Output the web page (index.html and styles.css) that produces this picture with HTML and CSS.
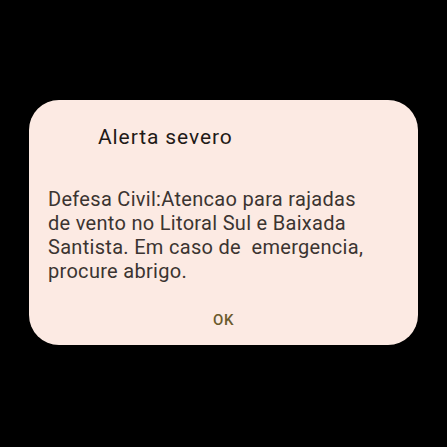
FILE: index.html
```html
<!DOCTYPE html>
<html lang="pt">
<head>
<meta charset="utf-8">
<link rel="stylesheet" href="styles.css">
</head>
<body>
<div class="dialog">
  <div class="title">Alerta severo</div>
  <div class="message">Defesa Civil:Atencao para rajadas de vento no Litoral Sul e Baixada Santista. Em caso de&nbsp; emergencia, procure abrigo.</div>
  <div class="actions"><span class="ok">OK</span></div>
</div>
</body>
</html>
```
FILE: styles.css
```css
html, body {
  margin: 0;
  padding: 0;
  background: #000;
  width: 447px;
  height: 447px;
  overflow: hidden;
}
body {
  font-family: Roboto, "Noto Sans", sans-serif;
}
.dialog {
  margin: 100px 0 0 29px;
  width: 389px;
  height: 245px;
  box-sizing: border-box;
  background: #fceae3;
  border-radius: 30px;
  padding-top: 23px;
  display: flex;
  flex-direction: column;
}
.title {
  font-size: 21px;
  line-height: 28px;
  letter-spacing: 0.9px;
  color: #1f1a18;
  padding-left: 69px;
}
.message {
  margin-top: 36px;
  padding: 0 50px 0 19px;
  font-size: 20px;
  line-height: 24px;
  letter-spacing: 0.3px;
  color: #3b3431;
}
.actions {
  margin-top: 27px;
  display: flex;
  justify-content: center;
}
.ok {
  font-size: 15px;
  line-height: 20px;
  font-weight: 500;
  letter-spacing: 0.5px;
  color: #6b5a2c;
}
```
